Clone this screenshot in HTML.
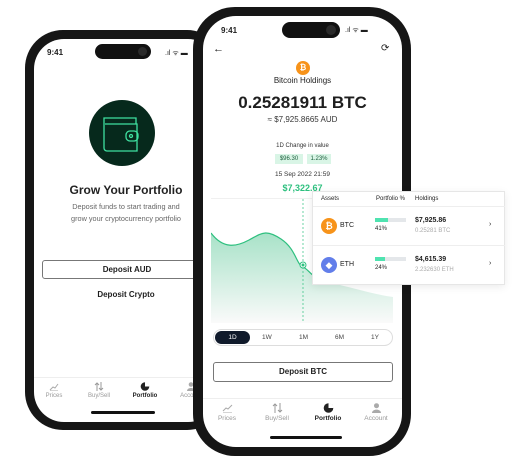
<!DOCTYPE html><html><head><style>
*{margin:0;padding:0;box-sizing:border-box}
body{width:524px;height:460px;background:#fff;position:relative;overflow:hidden;font-family:"Liberation Sans",sans-serif;color:#1e1e1e}
.a{position:absolute}
.phone{position:absolute;background:#161616;border-radius:40px}
.scr{position:absolute;background:#fff;border-radius:32px;overflow:hidden}
.c{text-align:center}
.tab{position:absolute;font-size:6px;color:#999;text-align:center}
.tab svg{display:block;margin:0 auto 2px}
</style></head><body>
<!-- left phone -->
<div class="phone" style="left:25px;top:30px;width:200px;height:400px;border-radius:38px"></div>
<div class="scr" style="left:34px;top:39px;width:184px;height:383px;border-radius:30px">
 <div class="a" style="left:13px;top:9px;font-size:8px;font-weight:bold">9:41</div>
 <div class="a" style="left:61px;top:5px;width:56px;height:15px;background:#111;border-radius:8px"><div class="a" style="right:4px;top:3px;width:9px;height:9px;border-radius:50%;background:#2a2a2a"></div></div>
 <div class="a" style="left:131px;top:10px;font-size:7px">.ıl ᯤ ▬</div>
 <div class="a" style="left:55px;top:61px;width:66px;height:66px;border-radius:50%;background:#06291c"></div>
 <svg class="a" style="left:66px;top:75px" width="44" height="40" viewBox="0 0 44 40" fill="none" stroke="#3fe0a0" stroke-width="1.3"><path d="M36 10V4H4v30a3 3 0 0 0 3 3h30V10H5"/><rect x="26" y="17" width="12" height="10" rx="4"/><circle cx="31" cy="22" r="1.5"/></svg>
 <div class="a c" style="left:0;width:184px;top:144px;font-size:12px;font-weight:bold;color:#222">Grow Your Portfolio</div>
 <div class="a c" style="left:0;width:184px;top:162px;font-size:7.3px;color:#666;line-height:12px">Deposit funds to start trading and<br>grow your cryptocurrency portfolio</div>
 <div class="a c" style="left:8px;top:221px;width:170px;height:19px;border:1px solid #777;border-radius:3px;font-size:8px;font-weight:bold;line-height:17px">Deposit AUD</div>
 <div class="a c" style="left:0;width:184px;top:251px;font-size:8px;font-weight:bold">Deposit Crypto</div>
 <div class="a" style="left:0;top:338px;width:184px;height:1px;background:#eee"></div>
 <div class="tab" style="left:5px;top:343px;width:30px"><svg width="10" height="9"><path d="M1 8L4 5 6 6 9 2" stroke="#aaa" fill="none"/><path d="M1 9H9" stroke="#aaa"/></svg>Prices</div>
 <div class="tab" style="left:50px;top:343px;width:30px"><svg width="10" height="9"><path d="M3 9V1M1 3L3 1 5 3M7 0V8M5 6L7 8 9 6" stroke="#999" fill="none"/></svg>Buy/Sell</div>
 <div class="tab" style="left:94px;top:343px;width:34px;color:#222;font-weight:bold"><svg width="10" height="9"><circle cx="5" cy="4.5" r="4.3" fill="#222"/><path d="M5 4.5V0A4.5 4.5 0 0 1 9.5 4.5Z" fill="#fff"/></svg>Portfolio</div>
 <div class="tab" style="left:140px;top:343px;width:34px"><svg width="10" height="9"><circle cx="5" cy="2.5" r="2.3" fill="#aaa"/><path d="M1 9C1 5 9 5 9 9Z" fill="#aaa"/></svg>Account</div>
 <div class="a" style="left:57px;top:372px;width:64px;height:3px;background:#111;border-radius:2px"></div>
</div>
<!-- right phone -->
<div class="phone" style="left:193px;top:7px;width:218px;height:449px;border-radius:42px"></div>
<div class="scr" style="left:203px;top:16px;width:199px;height:431px;border-radius:33px">
 <div class="a" style="left:18px;top:10px;font-size:8px;font-weight:bold">9:41</div>
 <div class="a" style="left:79px;top:6px;width:58px;height:16px;background:#111;border-radius:8px"><div class="a" style="right:4px;top:3px;width:10px;height:10px;border-radius:50%;background:#2a2a2a"></div></div>
 <div class="a" style="left:142px;top:10px;font-size:7px">.ıl ᯤ ▬</div>
 <div class="a" style="left:10px;top:27px;font-size:11px">←</div>
 <div class="a" style="left:178px;top:27px;font-size:10px">⟳</div>
 <div class="a c" style="left:93px;top:45px;width:14px;height:14px;border-radius:50%;background:#f7931a;color:#fff;font-size:8px;font-weight:bold;line-height:14px">₿</div>
 <div class="a c" style="left:0;width:199px;top:60px;font-size:8px">Bitcoin Holdings</div>
 <div class="a c" style="left:0;width:199px;top:77px;font-size:17px;font-weight:bold">0.25281911 BTC</div>
 <div class="a c" style="left:0;width:199px;top:99px;font-size:8px;color:#333">≈ $7,925.8665 AUD</div>
 <div class="a c" style="left:0;width:199px;top:127px;font-size:6px;color:#333">1D Change in value</div>
 <div class="a c" style="left:72px;top:138px;width:28px;height:10px;background:#d9f5e6;font-size:6px;line-height:10px;color:#1b5e3c">$96.30</div>
 <div class="a c" style="left:104px;top:138px;width:24px;height:10px;background:#d9f5e6;font-size:6px;line-height:10px;color:#1b5e3c">1.23%</div>
 <div class="a c" style="left:0;width:199px;top:155px;font-size:6.5px;color:#333">15 Sep 2022 21:59</div>
 <div class="a c" style="left:0;width:199px;top:167px;font-size:9px;font-weight:bold;color:#2ec07f">$7,322.67</div>
 <div class="a" style="left:8px;top:182px;width:182px;height:1px;background:#f0f0f0"></div>
 <svg class="a" style="left:8px;top:183px" width="182" height="124"><defs><linearGradient id="g" x1="0" y1="0" x2="0" y2="1"><stop offset="0" stop-color="#a8e2c8"/><stop offset="1" stop-color="#fafafa"/></linearGradient></defs>
 <path d="M0 34C12 50 25 48 38 41S55 30 70 40 85 65 92 68 100 80 120 84 160 95 182 98V124H0Z" fill="url(#g)"/>
 <path d="M0 34C12 50 25 48 38 41S55 30 70 40 85 65 92 68 100 80 120 84" fill="none" stroke="#2ec07f" stroke-width="1.2"/>
 <line x1="92" y1="0" x2="92" y2="124" stroke="#2ec07f" stroke-width="0.7" stroke-dasharray="2 2"/>
 <circle cx="92" cy="66" r="3" fill="#fff" stroke="#2ec07f"/><circle cx="92" cy="66" r="1.5" fill="#2ec07f"/></svg>
 <div class="a" style="left:10px;top:313px;width:180px;height:17px;border:1px solid #ddd;border-radius:9px"></div>
 <div class="a c" style="left:12px;top:315px;width:35px;height:13px;background:#101a2b;border-radius:7px;color:#fff;font-size:6.5px;line-height:13px">1D</div>
 <div class="a" style="left:59px;top:318px;font-size:6.5px;color:#444">1W</div>
 <div class="a" style="left:96px;top:318px;font-size:6.5px;color:#444">1M</div>
 <div class="a" style="left:132px;top:318px;font-size:6.5px;color:#444">6M</div>
 <div class="a" style="left:168px;top:318px;font-size:6.5px;color:#444">1Y</div>
 <div class="a c" style="left:10px;top:346px;width:180px;height:20px;border:1px solid #777;border-radius:3px;font-size:8px;font-weight:bold;line-height:18px">Deposit BTC</div>
 <div class="a" style="left:0;top:382px;width:199px;height:1px;background:#eee"></div>
 <div class="tab" style="left:9px;top:387px;width:30px;font-size:6.5px"><svg width="11" height="10"><path d="M1 8L4 5 6 6 10 2" stroke="#aaa" fill="none"/><path d="M1 10H10" stroke="#aaa"/></svg>Prices</div>
 <div class="tab" style="left:56px;top:387px;width:36px;font-size:6.5px"><svg width="11" height="10"><path d="M3 10V1M1 3L3 1 5 3M8 0V9M6 7L8 9 10 7" stroke="#999" fill="none"/></svg>Buy/Sell</div>
 <div class="tab" style="left:105px;top:387px;width:40px;font-size:6.5px;color:#222;font-weight:bold"><svg width="11" height="10"><circle cx="5.5" cy="5" r="4.8" fill="#222"/><path d="M5.5 5V0A5 5 0 0 1 10.5 5Z" fill="#fff"/></svg>Portfolio</div>
 <div class="tab" style="left:155px;top:387px;width:36px;font-size:6.5px"><svg width="11" height="10"><circle cx="5.5" cy="2.7" r="2.5" fill="#aaa"/><path d="M1 10C1 5.5 10 5.5 10 10Z" fill="#aaa"/></svg>Account</div>
 <div class="a" style="left:67px;top:420px;width:72px;height:3px;background:#111;border-radius:2px"></div>
</div>
<!-- card -->
<div class="a" style="left:312px;top:191px;width:193px;height:94px;background:#fff;border:1px solid #e6e6e6;box-shadow:0 2px 8px rgba(0,0,0,.08)">
 <div class="a" style="left:8px;top:4px;font-size:6px">Assets</div>
 <div class="a" style="left:63px;top:4px;font-size:6px">Portfolio %</div>
 <div class="a" style="left:102px;top:4px;font-size:6px">Holdings</div>
 <div class="a" style="left:0;top:14px;width:192px;height:1px;background:#eee"></div>
 <div class="a c" style="left:8px;top:26px;width:16px;height:16px;border-radius:50%;background:#f7931a;color:#fff;font-size:9px;font-weight:bold;line-height:16px">₿</div>
 <div class="a" style="left:27px;top:30px;font-size:7px">BTC</div>
 <div class="a" style="left:62px;top:26px;width:31px;height:4px;background:#e4e7ea"><div style="width:13px;height:4px;background:#4fe3b0"></div></div>
 <div class="a" style="left:62px;top:34px;font-size:6px">41%</div>
 <div class="a" style="left:102px;top:25px;font-size:7px;font-weight:bold">$7,925.86</div>
 <div class="a" style="left:102px;top:36px;font-size:6px;color:#aaa">0.25281 BTC</div>
 <div class="a" style="left:176px;top:29px;font-size:7px">›</div>
 <div class="a" style="left:0;top:53px;width:192px;height:1px;background:#eee"></div>
 <div class="a c" style="left:8px;top:65px;width:16px;height:16px;border-radius:50%;background:#627eea;color:#fff;font-size:9px;line-height:16px">◆</div>
 <div class="a" style="left:27px;top:69px;font-size:7px">ETH</div>
 <div class="a" style="left:62px;top:65px;width:31px;height:4px;background:#e4e7ea"><div style="width:10px;height:4px;background:#4fe3b0"></div></div>
 <div class="a" style="left:62px;top:73px;font-size:6px">24%</div>
 <div class="a" style="left:102px;top:64px;font-size:7px;font-weight:bold">$4,615.39</div>
 <div class="a" style="left:102px;top:75px;font-size:6px;color:#aaa">2.232630 ETH</div>
 <div class="a" style="left:176px;top:68px;font-size:7px">›</div>
</div>
</body></html>
